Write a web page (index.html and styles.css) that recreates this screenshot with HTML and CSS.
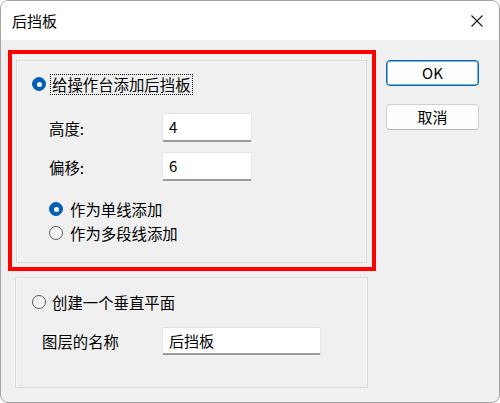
FILE: index.html
```html
<!DOCTYPE html>
<html>
<head>
<meta charset="utf-8">
<link rel="stylesheet" href="styles.css">
</head>
<body>
<div class="window">
  <div class="titlebar">
    <span class="title">后挡板</span>
    <svg class="close" width="12" height="12" viewBox="0 0 12 12"><path d="M0.5 0.5 L11.5 11.5 M11.5 0.5 L0.5 11.5" stroke="#1a1a1a" stroke-width="1.1" fill="none"/></svg>
  </div>
  <div class="body">
    <div class="left">
      <div class="highlight">
        <div class="group g1">
          <div class="radio-row top-radio">
            <span class="radio checked"></span>
            <span class="focus">给操作台添加后挡板</span>
          </div>
          <div class="field-row first-field">
            <span class="label">高度:</span>
            <span class="textbox short">4</span>
          </div>
          <div class="field-row second-field">
            <span class="label">偏移:</span>
            <span class="textbox short">6</span>
          </div>
          <div class="radio-row sub-radio1">
            <span class="radio checked"></span>
            <span class="rtext">作为单线添加</span>
          </div>
          <div class="radio-row sub-radio2">
            <span class="radio"></span>
            <span class="rtext">作为多段线添加</span>
          </div>
        </div>
      </div>
      <div class="group g2">
        <div class="radio-row g2-radio">
          <span class="radio"></span>
          <span class="rtext tight">创建一个垂直平面</span>
        </div>
        <div class="field-row layer-row">
          <span class="label wide">图层的名称</span>
          <span class="textbox long">后挡板</span>
        </div>
      </div>
    </div>
    <div class="buttons">
      <button class="btn primary">OK</button>
      <button class="btn cancel">取消</button>
    </div>
  </div>
</div>
</body>
</html>
```
FILE: styles.css
```css
html, body {
  margin: 0;
  padding: 0;
  background: #ffffff;
}
* { box-sizing: border-box; }

.window {
  width: 500px;
  height: 403px;
  border: 1px solid #a4a4a4;
  border-radius: 8px;
  overflow: hidden;
  background: #f0f0f0;
  font-family: "Noto Sans CJK SC", "Noto Sans", sans-serif;
  font-size: 15.4px;
  color: #000;
  display: flex;
  flex-direction: column;
}

.titlebar {
  height: 39px;
  background: #ffffff;
  display: flex;
  align-items: center;
  justify-content: space-between;
  padding: 0 16px 0 11px;
  flex-shrink: 0;
}
.title {
  font-size: 15px;
  line-height: 20px;
}
.close {
  display: block;
}

.body {
  flex: 1;
  display: flex;
  padding: 10px 0 0 7px;
}

.left {
  width: 368px;
  display: flex;
  flex-direction: column;
}

.highlight {
  width: 368px;
  height: 221px;
  border: 4px solid #ff0000;
  padding: 6px 5px 4px 4px;
  display: flex;
}

.group {
  border: 1px solid #d9d9d9;
  box-shadow: inset 1px 1px 0 #f7f7f7;
  display: flex;
  flex-direction: column;
}
.g1 {
  flex: 1;
  padding: 13px 0 0 15px;
}
.g2 {
  margin: 6px 0 0 7px;
  width: 353px;
  height: 111px;
  padding: 14px 0 0 16px;
}

.radio-row {
  display: flex;
  align-items: center;
  height: 20px;
  line-height: 20px;
}
.radio {
  width: 14px;
  height: 14px;
  border-radius: 50%;
  border: 1px solid #5e5e5e;
  background: #f4f4f4;
  flex-shrink: 0;
  position: relative;
}
.radio.checked {
  border-color: #0060b9;
  background: #0060b9;
}
.radio.checked::after {
  content: "";
  position: absolute;
  left: 3.5px;
  top: 3.5px;
  width: 5px;
  height: 5px;
  border-radius: 50%;
  background: #ffffff;
}

.focus {
  margin-left: 5px;
  padding: 0 1px;
  outline: 1px dotted #000;
  line-height: 19px;
}
.rtext {
  margin-left: 7px;
}
.rtext.tight {
  margin-left: 6px;
}

.sub-radio1 {
  margin: 18px 0 0 17px;
}
.sub-radio2 {
  margin: 4px 0 0 17px;
}

.field-row {
  display: flex;
  align-items: center;
}
.first-field {
  margin: 19px 0 0 17px;
}
.second-field {
  margin: 10px 0 0 17px;
}
.label {
  width: 113px;
  line-height: 20px;
}
.label.wide {
  width: 120px;
}
.layer-row {
  margin: 15px 0 0 10px;
}

.textbox {
  display: block;
  background: #ffffff;
  border: 1px solid #e4e4e4;
  border-bottom: 2px solid #9a9a9a;
  border-radius: 2px;
  padding-left: 6px;
  font-family: "Noto Sans CJK SC", "Noto Sans", sans-serif;
  font-size: 15px;
  line-height: 26px;
  color: #000;
}
.textbox.short {
  width: 90px;
  height: 29px;
}
.textbox.long {
  width: 159px;
  height: 28px;
  line-height: 25px;
}

.buttons {
  display: flex;
  flex-direction: column;
  margin: 10px 0 0 10px;
}
.btn {
  width: 93px;
  height: 26px;
  background: #fdfdfd;
  border: 1px solid #d0d0d0;
  border-bottom-color: #b5b5b5;
  border-radius: 4px;
  font-family: "Noto Sans CJK SC", "Noto Sans", sans-serif;
  font-size: 15px;
  color: #000;
  padding: 0;
  line-height: 22px;
}
.btn.primary {
  border: 1px solid #0067c0;
  box-shadow: inset 0 0 0 0.5px #0067c0;
}
.btn.cancel {
  margin-top: 18px;
}
```
